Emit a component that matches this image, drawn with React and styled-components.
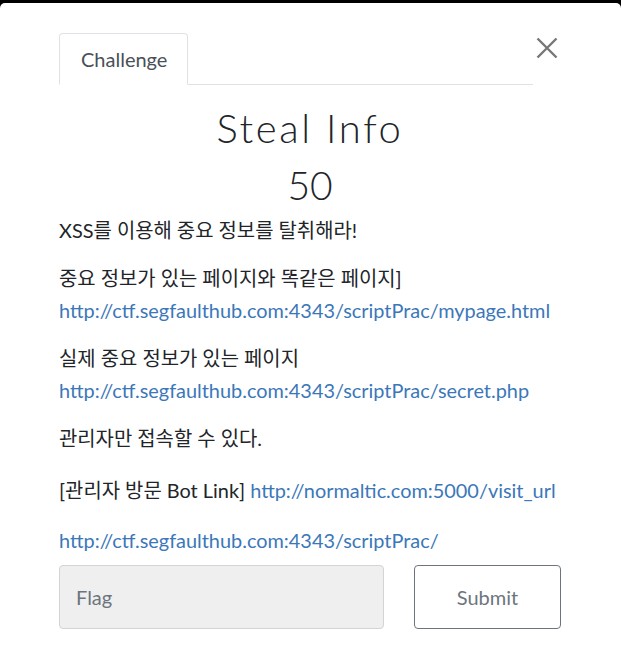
import React from "react";
import styled, { createGlobalStyle } from "styled-components";

const Global = createGlobalStyle`
  html, body { margin: 0; padding: 0; background: #000; }
  body { font-family: Lato, "Noto Sans CJK KR", sans-serif; }
  * { box-sizing: border-box; }
`;

const Modal = styled.div`
  margin-top: 3px;
  min-height: 652px;
  background: #fff;
  border-radius: 5px 5px 0 0;
  padding: 30px 60px 0 59px;
  color: #212529;
  font-family: Lato, "Noto Sans CJK KR", sans-serif;
`;

const Header = styled.div`
  display: flex;
  align-items: flex-start;
`;

const Nav = styled.div`
  flex: 1;
  display: flex;
  height: 52px;
  border-bottom: 1px solid #dee2e6;
`;

const Tab = styled.div`
  height: 52px;
  margin-bottom: -1px;
  padding: 0 20px 0 21px;
  display: flex;
  align-items: center;
  background: #fff;
  border: 1px solid #dee2e6;
  border-bottom-color: #fff;
  border-radius: 4px 4px 0 0;
  font-size: 20px;
  color: #495057;
`;

const Close = styled.button`
  width: 28px;
  height: 30px;
  padding: 0;
  border: 0;
  background: transparent;
  display: flex;
  align-items: center;
  justify-content: center;
  cursor: pointer;
`;

const Title = styled.h3`
  margin: 19px 0 0;
  text-align: center;
  font-size: 40px;
  font-weight: 300;
  line-height: 48px;
  letter-spacing: 2.6px;
  color: #212529;
`;

const Value = styled.h4`
  margin: 12px 0 0;
  text-align: center;
  font-size: 39px;
  font-weight: 300;
  line-height: 42px;
  color: #212529;
`;

const Desc = styled.div`
  margin-top: 8px;
  font-size: 19.9px;
  line-height: 32px;
`;

const P = styled.p`
  margin: 0 0 ${(p) => (p.$gap === undefined ? 16 : p.$gap)}px;
`;

const Link = styled.a`
  color: #3b77b9;
  text-decoration: none;
`;

const Row = styled.div`
  display: grid;
  grid-template-columns: 325fr 147fr;
  gap: 30px;
  margin-top: 9px;
`;

const Input = styled.input`
  height: 64px;
  border: 1px solid #d4d4d4;
  border-radius: 4px;
  background: #efefef;
  padding: 0 16px;
  font-family: Lato, sans-serif;
  font-size: 20px;
  color: #495057;
  &::placeholder { color: #6c757d; }
  outline: none;
`;

const Submit = styled.button`
  height: 64px;
  border: 1px solid #6c757d;
  border-radius: 4px;
  background: #fff;
  font-family: Lato, sans-serif;
  font-size: 20px;
  color: #6c757d;
  cursor: pointer;
`;

export default function App() {
  return (
    <>
      <Global />
      <Modal>
        <Header>
          <Nav>
            <Tab>Challenge</Tab>
          </Nav>
          <Close aria-label="Close">
            <svg width="22" height="22" viewBox="0 0 22 22">
              <path d="M1.5 1.5 L20.5 20.5 M20.5 1.5 L1.5 20.5" stroke="#777" strokeWidth="2.4" fill="none" />
            </svg>
          </Close>
        </Header>
        <Title>Steal Info</Title>
        <Value>50</Value>
        <Desc>
          <P>XSS를 이용해 중요 정보를 탈취해라!</P>
          <P>
            중요 정보가 있는 페이지와 똑같은 페이지]
            <br />
            <Link href="#">http://ctf.segfaulthub.com:4343/scriptPrac/mypage.html</Link>
          </P>
          <P>
            실제 중요 정보가 있는 페이지
            <br />
            <Link href="#">http://ctf.segfaulthub.com:4343/scriptPrac/secret.php</Link>
          </P>
          <P $gap={20}>관리자만 접속할 수 있다.</P>
          <P $gap={18}>
            [관리자 방문 Bot Link] <Link href="#">http://normaltic.com:5000/visit_url</Link>
          </P>
          <P $gap={0}>
            <Link href="#">http://ctf.segfaulthub.com:4343/scriptPrac/</Link>
          </P>
        </Desc>
        <Row>
          <Input placeholder="Flag" />
          <Submit>Submit</Submit>
        </Row>
      </Modal>
    </>
  );
}
